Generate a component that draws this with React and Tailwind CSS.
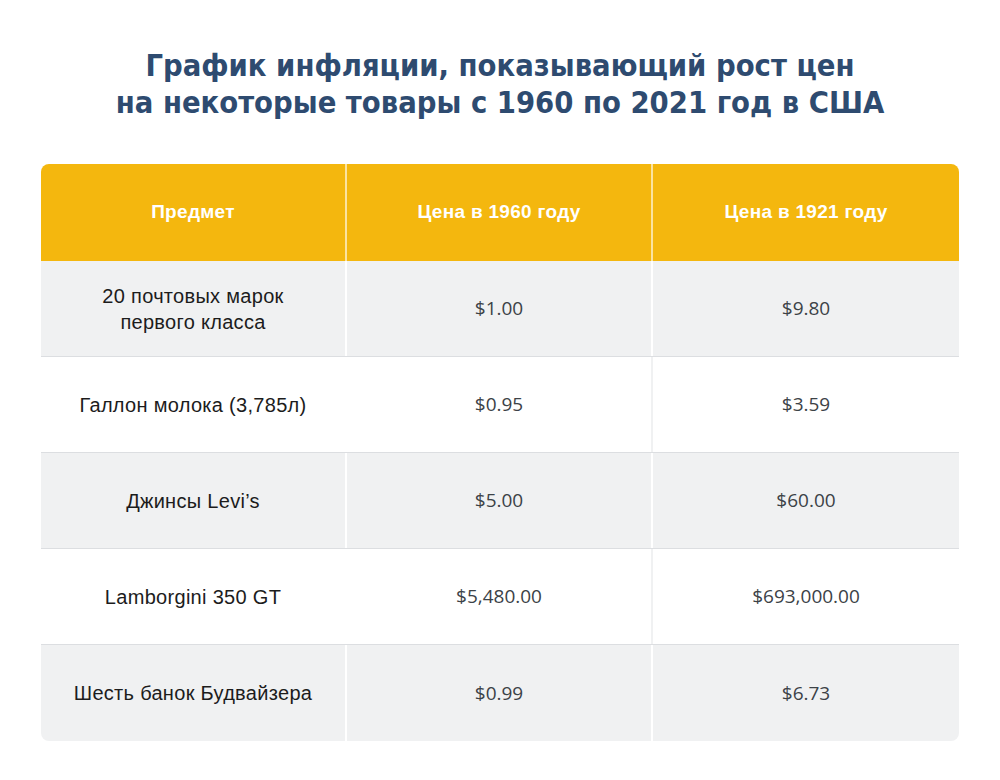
import React from 'react';

const rows = [
  { item: ['20 почтовых марок', 'первого класса'], p1960: '$1.00', p2021: '$9.80' },
  { item: ['Галлон молока (3,785л)'], p1960: '$0.95', p2021: '$3.59' },
  { item: ['Джинсы Levi’s'], p1960: '$5.00', p2021: '$60.00' },
  { item: ['Lamborgini 350 GT'], p1960: '$5,480.00', p2021: '$693,000.00' },
  { item: ['Шесть банок Будвайзера'], p1960: '$0.99', p2021: '$6.73' },
];

export default function App() {
  return (
    <div className="w-[1000px] h-[780px] bg-white pt-[47px]">
      <h1 className="text-center text-[30.6px] leading-[37px] font-bold text-[#2e4b70] font-['Liberation_Sans_Narrow','DejaVu_Sans_Condensed',sans-serif]">
        График инфляции, показывающий рост цен
        <br />
        на некоторые товары с 1960 по 2021 год в США
      </h1>

      {/* Table */}
      <div className="mx-[41px] mt-[43px] rounded-lg overflow-hidden">
        <div className="grid grid-cols-3 h-[97px] bg-[#f4b70e] text-white font-bold text-[19px] tracking-[0.3px] font-['Liberation_Sans',sans-serif]">
          <div className="flex items-center justify-center border-r-2 border-[#fbe3a0]">Предмет</div>
          <div className="flex items-center justify-center border-r-2 border-[#fbe3a0]">Цена в 1960 году</div>
          <div className="flex items-center justify-center">Цена в 1921 году</div>
        </div>
        {rows.map((r, i) => (
          <div
            key={i}
            className={`grid grid-cols-3 h-[96px] ${i % 2 === 0 ? 'bg-[#f0f1f2]' : 'bg-white'} ${i < rows.length - 1 ? 'border-b border-[#dcdee1]' : ''}`}
          >
            <div className="flex flex-col items-center justify-center border-r-2 border-white text-[20px] leading-[26px] tracking-[0.3px] text-[#1c1c1c] font-['Liberation_Sans',sans-serif]">
              {r.item.map((t, j) => <span key={j}>{t}</span>)}
            </div>
            <div className={`flex items-center justify-center border-r-2 ${i % 2 === 0 ? 'border-white' : 'border-[#f0f1f2]'} text-[19px] text-[#3c4247] font-['Open_Sans',sans-serif]`}>
              {r.p1960}
            </div>
            <div className="flex items-center justify-center text-[19px] text-[#3c4247] font-['Open_Sans',sans-serif]">
              {r.p2021}
            </div>
          </div>
        ))}
      </div>
    </div>
  );
}
